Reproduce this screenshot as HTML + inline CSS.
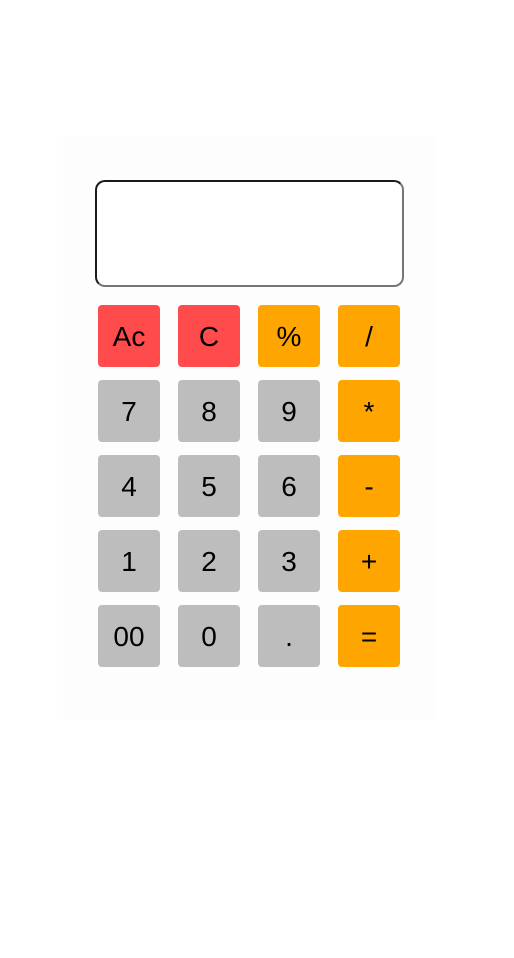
<!DOCTYPE html><html><head><style>
body{margin:0;background:#fff;width:514px;height:958px;position:relative;font-family:"Liberation Sans",Arial,sans-serif}
.c{position:absolute;left:63px;top:136px;width:374px;height:584px;background:#fdfdfd}
.d{position:absolute;left:95px;top:180px;width:305px;height:103px;border:2px solid;border-color:#1a1a1a #767676 #767676 #1a1a1a;border-radius:10px;background:#fff}
.b{position:absolute;width:62px;height:62px;border-radius:4px;display:flex;align-items:center;justify-content:center;font-size:28px;padding-top:2px;box-sizing:border-box;color:#000}
.r{background:#ff4b4b}.o{background:#ffa500}.g{background:#bdbdbd}
</style></head><body><div class="c"></div><div class="d"></div>
<div class="b r" style="left:98px;top:305px">Ac</div><div class="b r" style="left:178px;top:305px">C</div><div class="b o" style="left:258px;top:305px">%</div><div class="b o" style="left:338px;top:305px">/</div>
<div class="b g" style="left:98px;top:380px">7</div><div class="b g" style="left:178px;top:380px">8</div><div class="b g" style="left:258px;top:380px">9</div><div class="b o" style="left:338px;top:380px">*</div>
<div class="b g" style="left:98px;top:455px">4</div><div class="b g" style="left:178px;top:455px">5</div><div class="b g" style="left:258px;top:455px">6</div><div class="b o" style="left:338px;top:455px">-</div>
<div class="b g" style="left:98px;top:530px">1</div><div class="b g" style="left:178px;top:530px">2</div><div class="b g" style="left:258px;top:530px">3</div><div class="b o" style="left:338px;top:530px">+</div>
<div class="b g" style="left:98px;top:605px">00</div><div class="b g" style="left:178px;top:605px">0</div><div class="b g" style="left:258px;top:605px">.</div><div class="b o" style="left:338px;top:605px">=</div>
</body></html>
